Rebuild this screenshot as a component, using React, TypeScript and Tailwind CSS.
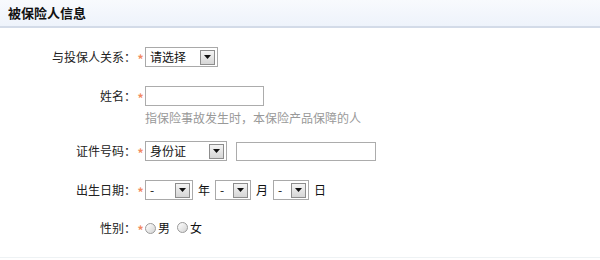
import React from "react";

const FONT = { fontFamily: '"Noto Sans CJK SC", "Noto Sans", sans-serif' };

function Arrow() {
  return (
    <span className="flex h-[15px] w-[15px] items-center justify-center border border-[#8d8d8d] bg-gradient-to-b from-[#f4f4f4] to-[#d6d6d6]">
      <svg viewBox="0 0 7 4" className="h-[4px] w-[7px]">
        <path d="M0 0h7L3.5 4z" fill="#111" />
      </svg>
    </span>
  );
}

function FakeSelect({ text, w }: { text: string; w: string }) {
  return (
    <div className={`flex h-[20px] items-center justify-between border border-[#a9a9a9] bg-white pl-[4px] pr-[2px] text-[12px] text-[#111] ${w}`}>
      <span className="leading-none">{text}</span>
      <Arrow />
    </div>
  );
}

function Radio() {
  return <span className="inline-block h-[11px] w-[11px] rounded-full border border-[#9a9a9a] bg-gradient-to-br from-[#ffffff] to-[#d4d4d4]" />;
}

function Row({ label, children, className = "" }: { label: string; children: React.ReactNode; className?: string }) {
  return (
    <div className={`flex items-start ${className}`}>
      <div className="flex h-[20px] w-[136px] items-center justify-end text-[12px] text-[#222]">{label}</div>
      <div className="flex h-[20px] w-[9px] items-center justify-center pt-[3px] text-[12px] font-bold text-[#f28a60]">*</div>
      <div className="flex flex-col">{children}</div>
    </div>
  );
}

export default function App() {
  return (
    <div className="flex h-[260px] w-[600px] flex-col bg-white" style={FONT}>
      <div className="flex h-[28px] items-center border-b-2 border-[#d3dbe8] bg-gradient-to-b from-[#f8fafd] to-[#eef3fb] pl-[8px]">
        <h2 className="text-[13px] font-bold text-[#111]">被保险人信息</h2>
      </div>

      <div className="flex flex-1 flex-col border-b border-[#eef2f4] pt-[19px]">
        <Row label="与投保人关系：">
          <FakeSelect text="请选择" w="w-[73px]" />
        </Row>

        <Row label="姓名：" className="mt-[19px]">
          <div className="h-[20px] w-[119px] border border-[#acacac] bg-white" />
          <p className="mt-[4px] text-[12px] leading-[16px] text-[#999]">指保险事故发生时，本保险产品保障的人</p>
        </Row>

        <Row label="证件号码：" className="mt-[15px]">
          <div className="flex items-center gap-[9px]">
            <FakeSelect text="身份证" w="w-[82px]" />
            <div className="h-[19px] w-[140px] border border-[#acacac] bg-white" />
          </div>
        </Row>

        <Row label="出生日期：" className="mt-[19px]">
          <div className="flex items-center text-[12px] text-[#111]">
            <FakeSelect text="-" w="w-[48px]" />
            <span className="mx-[5px]">年</span>
            <FakeSelect text="-" w="w-[36px]" />
            <span className="mx-[5px]">月</span>
            <FakeSelect text="-" w="w-[36px]" />
            <span className="ml-[5px]">日</span>
          </div>
        </Row>

        <Row label="性别：" className="mt-[18px]">
          <div className="flex h-[20px] items-center text-[12px] text-[#111]">
            <Radio />
            <span className="ml-[2px]">男</span>
            <span className="ml-[7px]"><Radio /></span>
            <span className="ml-[2px]">女</span>
          </div>
        </Row>
      </div>
      <div className="h-[2px]" />
    </div>
  );
}
